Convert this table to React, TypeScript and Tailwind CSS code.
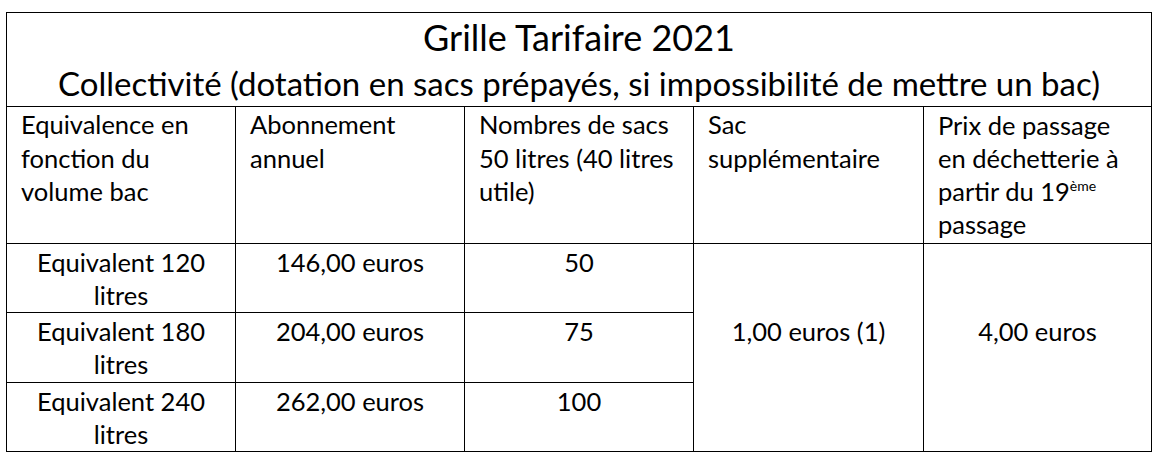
const font = { fontFamily: "Lato, 'Open Sans', sans-serif" };

const headers = [
  ["Equivalence en", "fonction du", "volume bac"],
  ["Abonnement", "annuel"],
  ["Nombres de sacs", "50 litres (40 litres", "utile)"],
  ["Sac", "supplémentaire"],
];

const rows = [
  { volume: "Equivalent 120", price: "146,00 euros", bags: "50" },
  { volume: "Equivalent 180", price: "204,00 euros", bags: "75" },
  { volume: "Equivalent 240", price: "262,00 euros", bags: "100" },
];

export default function App() {
  return (
    <div className="min-h-screen bg-white pl-[6px] pt-[12px] text-black" style={font}>
      <div className="grid w-[1146px] grid-cols-[229px_229px_229px_230px_228px] grid-rows-[94px_137px_69px_70px_69px] border-l border-t border-black">
        <div className="col-span-5 border-b border-r border-black pt-[1px] text-center">
          <div className="text-[36px] leading-[46px]">Grille Tarifaire 2021</div>
          <div className="text-[33px] leading-[47px]">
            Collectivité (dotation en sacs prépayés, si impossibilité de mettre un bac)
          </div>
        </div>

        {headers.map((lines, i) => (
          <div key={i} className="border-b border-r border-black pl-[14px] pt-[1px] text-[25.5px] leading-[33.5px]">
            {lines.map((l) => (
              <div key={l}>{l}</div>
            ))}
          </div>
        ))}
        <div className="border-b border-r border-black pl-[14px] pt-[2px] text-[25.5px] leading-[33px]">
          <div>Prix de passage</div>
          <div>en déchetterie à</div>
          <div>
            partir du 19<sup className="-top-[0.75em] text-[14px]">ème</sup>
          </div>
          <div>passage</div>
        </div>

        {rows.map((r, i) => (
          <>
            <div key={"v" + i} className="border-b border-r border-black pt-[2px] text-center text-[25.5px] leading-[33px]">
              <div>{r.volume}</div>
              <div>litres</div>
            </div>
            <div key={"p" + i} className="border-b border-r border-black pt-[2px] text-center text-[25.5px] leading-[33px]">
              {r.price}
            </div>
            <div key={"b" + i} className="border-b border-r border-black pt-[2px] text-center text-[25.5px] leading-[33px]">
              {r.bags}
            </div>
            {i === 0 && (
              <>
                <div className="row-span-3 border-b border-r border-black pt-[71px] text-center text-[25.5px] leading-[33px]">
                  1,00 euros (1)
                </div>
                <div className="row-span-3 border-b border-r border-black pt-[71px] text-center text-[25.5px] leading-[33px]">
                  4,00 euros
                </div>
              </>
            )}
          </>
        ))}
      </div>
    </div>
  );
}
